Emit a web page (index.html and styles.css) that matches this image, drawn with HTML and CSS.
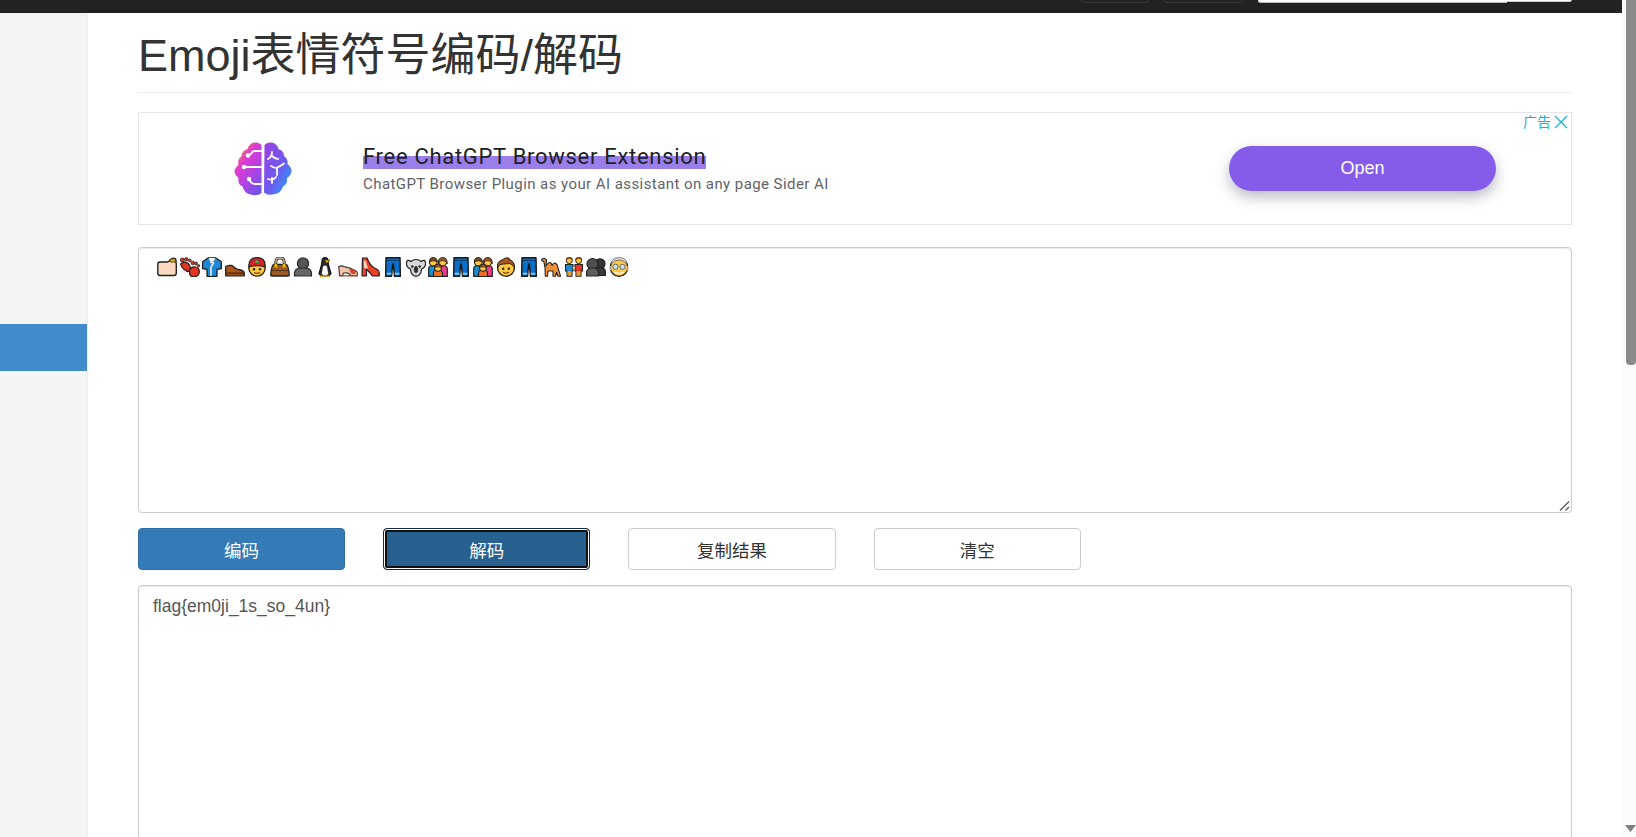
FILE: index.html
```html
<!DOCTYPE html>
<html lang="zh">
<head>
<meta charset="utf-8">
<title>Emoji表情符号编码/解码</title>
<link rel="stylesheet" href="styles.css">
</head>
<body>
<svg class="defs" width="0" height="0" aria-hidden="true">
  <defs>
    <linearGradient id="bl" x1="0.2" y1="0" x2="0.9" y2="1"><stop offset="0" stop-color="#f7a81f"/><stop offset=".3" stop-color="#e03ad0"/><stop offset=".65" stop-color="#a845e6"/><stop offset="1" stop-color="#6a55e8"/></linearGradient>
    <linearGradient id="br" x1="0" y1="0" x2="1" y2="1"><stop offset="0" stop-color="#a03fe0"/><stop offset=".55" stop-color="#6a5cf0"/><stop offset="1" stop-color="#1fb0f8"/></linearGradient>
    <symbol id="jeans" viewBox="0 0 20 20"><path d="M3 .8h14l.3 18.400h-5.800L10.300 7h-.6L8.500 19.200H2.700z" fill="#0a6ecb" stroke="#1a1a1a" stroke-width="1.500" stroke-linejoin="round"/><path d="M3.500 3.400h13" stroke="#0a3f78" stroke-width="1"/><path d="M3.700 16.800h4.700M11.700 16.800h4.700" stroke="#7cc6ee" stroke-width="2"/></symbol>
    <symbol id="family" viewBox="0 0 20 20"><path d="M.7 19.300v-7.800q0-3 4.300-3t4 3v7.800z" fill="#1d8fd0" stroke="#222" stroke-width="1.200"/><path d="M11 19.300v-7.800q0-3 4-3t4.300 3v7.800z" fill="#ec3f87" stroke="#222" stroke-width="1.200"/><circle cx="5.300" cy="5" r="3.900" fill="#ffc83d" stroke="#222" stroke-width="1.100"/><path d="M1.500 4.800Q1.800.6 5.300.6t3.800 4.200Q5.300 2.600 1.500 4.800z" fill="#7a4a1f" stroke="#222" stroke-width=".8"/><circle cx="14.700" cy="5" r="3.900" fill="#ffc83d" stroke="#222" stroke-width="1.100"/><path d="M10.300 7Q9.800.6 14.700.6T19.200 7q-.5-3.500-4.500-3.500T10.300 7z" fill="#a3561f" stroke="#222" stroke-width=".8"/><path d="M5.500 19.500v-3.500q0-3 4.500-3t4.500 3v3.500z" fill="#f36b21" stroke="#222" stroke-width="1.200"/><circle cx="10" cy="10.800" r="3.500" fill="#ffc83d" stroke="#222" stroke-width="1.100"/><path d="M6.600 10.500q.3-3.200 3.400-3.200t3.400 3.200q-3.400-1.500-6.800 0z" fill="#a3561f" stroke="#222" stroke-width=".7"/></symbol>
    <symbol id="bust" viewBox="0 0 20 20"><circle cx="10" cy="6.500" r="5.600" fill="#555" stroke="#2a2a2a" stroke-width="1.200"/><path d="M1.500 19v-2.500q0-5 5.500-5.500h6q5.500.5 5.500 5.500V19z" fill="#666" stroke="#2a2a2a" stroke-width="1.200"/></symbol>
  </defs>
</svg>

<div class="page">
  <header class="topbar">
    <span class="top-btn top-btn-a"></span>
    <span class="top-btn top-btn-b"></span>
    <span class="top-search"><span class="top-input"></span><span class="top-go"></span></span>
  </header>

  <div class="shell">
    <nav class="sidebar"><a class="side-active"></a></nav>

    <main class="content">
      <h1 class="title">Emoji表情符号编码/解码</h1>

      <section class="ad">
        <div class="ad-logo">
          <svg width="58" height="54" viewBox="0 0 58 54">
            <path d="M27.500 3q-2-3-6.500-2.500Q15 1 13.500 7 8 8.500 7.500 14 3 17.500 4.500 23 0 26.500.5 30t4 6q-1 6 4 8.500Q10 51 16.500 52.500q7 2 11-1.500z" fill="url(#bl)"/>
            <path d="M30.500 3q2-3 6.500-2.500Q43 1 44.500 7 50 9 50 14q4.500 3.500 3.500 8 4.500 3.500 4 7.500t-4.500 6.500q1 6-4 8.500-2 6.500-8 7.500-7.500 2-11-1.500z" fill="url(#br)"/>
            <g fill="none" stroke="#fff" stroke-width="1.800" stroke-linecap="round">
              <path d="M27 9h-6q-3 0-4 3l-3 1.500"/><path d="M27 25H10"/><path d="M27 42h-6q-4 0-6-5"/>
              <path d="M38 10q0 5-4 7M38 14q3 3 6 3"/><path d="M37 24q5 3 6 1.500 3-1 7-4M43 26v7"/><path d="M34 37q5 2 8-2M38 36v5"/>
            </g>
            <g fill="#fff"><circle cx="14" cy="13.500" r="2.200"/><circle cx="10" cy="25" r="2.200"/><circle cx="15" cy="37" r="2.200"/></g>
          </svg>
        </div>
        <div class="ad-copy">
          <div class="ad-title"><span class="ad-mark">Free ChatGPT Browser Extension</span></div>
          <div class="ad-sub">ChatGPT Browser Plugin as your AI assistant on any page Sider AI</div>
        </div>
        <button class="ad-open" type="button">Open</button>
        <div class="ad-choice"><span>广告</span><svg width="14" height="14" viewBox="0 0 14 14"><path d="M1 1l12 12M13 1L1 13" stroke="#14b4d2" stroke-width="1.300" fill="none"/></svg></div>
      </section>

      <div class="field-input">
        <div class="emoji-row">
          <svg class="e" viewBox="0 0 20 20"><path d="M.8 16V7.500Q.8 5 3 5h7q2 0 3.500-2.500Q15.500.5 18 1.500q1.300.5 1 3.500.3 2 .3 4v7q0 2.500-2.500 2.500H3Q.8 18.500.8 16z" fill="#fbd9c0" stroke="#222" stroke-width="1.400"/><path d="M12 4.500q2-3.500 6-3l.7 3.500Q15 5.500 12 4.500z" fill="#f4b400" stroke="#222" stroke-width=".8"/></svg>
          <svg class="e" viewBox="0 0 20 20"><path d="M.6 7q3.500-3.500 7.400-.8 3 2.500 2.500 6.300L9.300 14q-1.500 1.200-3 0Q1.300 11 .6 7z" fill="#e0341f" stroke="#222" stroke-width="1.200"/><path d="M9.500 13q2-4 6-3t3.900 5q-.7 4.500-4.700 4.700-4.500.3-5-2.500z" fill="#e0341f" stroke="#222" stroke-width="1.200"/><g fill="#e0341f" stroke="#222" stroke-width=".8"><circle cx="2.300" cy="3" r="2"/><circle cx="6.300" cy="2.200" r="1.700"/><circle cx="9.800" cy="3.500" r="1.400"/><circle cx="12.800" cy="6" r="1.700"/><circle cx="16" cy="6.500" r="1.500"/><circle cx="18.600" cy="8.800" r="1.200"/></g></svg>
          <svg class="e" viewBox="0 0 20 20"><path d="M6.500.8h7l5.700 3.700.3 7-4.500.8v7H5v-7L.5 11.500l.3-7z" fill="#1e88d6" stroke="#222" stroke-width="1.300" stroke-linejoin="round"/><path d="M7 1.500l4.500 4.500L9 10v9M13 1.500L8.500 6" fill="none" stroke="#eee" stroke-width="1.600"/><path d="M7.500 1h5L8.500 5z" fill="#fff"/></svg>
          <svg class="e" viewBox="0 0 20 20"><path d="M.7 9.500q3-1.500 6.300-1 3 3 6 4 6 .8 6.300 3.500v2.800H.7z" fill="#b0561d" stroke="#222" stroke-width="1.300" stroke-linejoin="round"/><path d="M1 16.300h18" stroke="#54300f" stroke-width="1.800"/></svg>
          <svg class="e" viewBox="0 0 20 20"><circle cx="10" cy="11" r="8.200" fill="#ffc83d" stroke="#222" stroke-width="1.300"/><path d="M2 10Q1 .8 10 .6T18 10q-8-2.500-16 0z" fill="#d3232a" stroke="#222" stroke-width="1.200"/><path d="M10 2.300l2.200 3.700H7.800z" fill="#35b44a"/><circle cx="7" cy="12.300" r="1.200" fill="#222"/><circle cx="13" cy="12.300" r="1.200" fill="#222"/><path d="M7 15.500q3 1.800 6 0" stroke="#7a3d10" stroke-width="1.100" fill="none"/></svg>
          <svg class="e" viewBox="0 0 20 20"><path d="M5.800 9V5.500q0-4.700 4.200-4.700t4.200 4.700V9" fill="none" stroke="#222" stroke-width="2.800"/><path d="M5.800 9V5.500q0-4.700 4.200-4.700t4.200 4.700V9" fill="none" stroke="#e8c9a8" stroke-width="1.200"/><path d="M3.500 7.500h13q2 1 2.800 10.500 0 1-1.200 1H1.900Q.7 19 .7 18q.8-9.500 2.800-10.500z" fill="#9a5a24" stroke="#222" stroke-width="1.300"/><path d="M2 13.500h16" stroke="#5a3312" stroke-width="1"/><rect x="4.500" y="7" width="2.800" height="3.500" fill="#f4b400"/><rect x="12.700" y="7" width="2.800" height="3.500" fill="#f4b400"/></svg>
          <svg class="e" viewBox="0 0 20 20"><use href="#bust"/></svg>
          <svg class="e" viewBox="0 0 20 20"><path d="M7 4.500Q7 .7 10 .7t3 3.800l.5 3.500 2.500 8.500-2 2.500H6l-2-2.500L6.500 8z" fill="#2c2c2c" stroke="#111" stroke-width="1.200"/><path d="M8 9.500q2-2 4 0l1.200 7-1.500 2H8.300l-1.500-2z" fill="#fafafa"/><path d="M9.500 3h5.500L11.500 6.500z" fill="#f4b400" stroke="#222" stroke-width=".6"/><path d="M5 19.200h4M11 19.200h4" stroke="#f4a300" stroke-width="1.600"/></svg>
          <svg class="e" viewBox="0 0 20 20"><path d="M.8 9.500q2.500-1.200 5.200 0 3 1 6 1.500l3 1.500q4 1 4.300 3.500V18.800H13q-2-3-5-3l-3 .5v2.500H1.500z" fill="#f3c6a8" stroke="#333" stroke-width="1.100" stroke-linejoin="round"/><path d="M11 11.500l7 2.200-1 3.500-4-.8z" fill="#d9412b"/><path d="M1.500 18.800h18" stroke="#b33820" stroke-width="1.200"/></svg>
          <svg class="e" viewBox="0 0 20 20"><path d="M2.500 1H7q2.500 6.500 6.500 9.500 5.500 2 5.800 5.500v2.800h-7Q8 13.500 6.500 12V18.800H2z" fill="#ec4028" stroke="#222" stroke-width="1.200" stroke-linejoin="round"/><path d="M3.800 3.500l2 .5 2.200 8-4-1z" fill="#fbd4b8"/></svg>
          <svg class="e" viewBox="0 0 20 20"><use href="#jeans"/></svg>
          <svg class="e" viewBox="0 0 20 20"><path d="M4.800 4.500Q.8 1.500.5 6t4 6l.7 4q2 3.300 4.800 3.300t4.800-3.300l.7-4q4.300-1.500 4-6t-4.300-1.500Q13 2.500 10 2.500T4.800 4.500z" fill="#d8d8d8" stroke="#222" stroke-width="1.200"/><ellipse cx="10" cy="12.500" rx="2.200" ry="3.500" fill="#333"/><circle cx="6.300" cy="9.500" r="1.200" fill="#222"/><circle cx="13.700" cy="9.500" r="1.200" fill="#222"/></svg>
          <svg class="e" viewBox="0 0 20 20"><use href="#family"/></svg>
          <svg class="e" viewBox="0 0 20 20"><use href="#jeans"/></svg>
          <svg class="e" viewBox="0 0 20 20"><use href="#family"/></svg>
          <svg class="e" viewBox="0 0 20 20"><circle cx="10" cy="10.800" r="8.500" fill="#ffc83d" stroke="#222" stroke-width="1.300"/><path d="M1.500 11Q.5 4 7 2.500q2-2.500 6-1.500 1 .5 0 1.500 6 2 5.500 8.500-2-4-5-4.500Q7 7 4 7.500 3 9 1.500 11z" fill="#a8561f" stroke="#222" stroke-width=".9"/><circle cx="7.200" cy="11.800" r="1.200" fill="#222"/><circle cx="12.800" cy="11.800" r="1.200" fill="#222"/><path d="M7 15.300q3 1.800 6 0" stroke="#7a3d10" stroke-width="1.100" fill="none"/></svg>
          <svg class="e" viewBox="0 0 20 20"><use href="#jeans"/></svg>
          <svg class="e" viewBox="0 0 20 20"><path d="M.5 3q1-2.200 3-1.700L5.500 3 5 9q2-3.500 3.700-3.500T11 8.500Q13 5 15 6.500t2.300 5.500l2.300 7.200H17l-1.500-4-1 4H12V14H7l-.5 5.200H4.300L4 11 3 5z" fill="#f0913a" stroke="#222" stroke-width="1.100" stroke-linejoin="round"/></svg>
          <svg class="e" viewBox="0 0 20 20"><circle cx="5.300" cy="3.600" r="3" fill="#ffc83d" stroke="#222"/><circle cx="14.700" cy="3.600" r="3" fill="#ffc83d" stroke="#222"/><path d="M2 2.500Q5.300-1 8.600 2.500M11.400 2.500q3.300-3.500 6.600 0" stroke="#7a3d10" stroke-width="1.400" fill="none"/><path d="M1.500 7.500h7.500v6.500H8v5.200H3V14H1.500z" fill="#1c8bd1" stroke="#222" stroke-width="1.100"/><path d="M11 7.500h7.500v6.500H17v5.200h-5V14h-1z" fill="#e8342a" stroke="#222" stroke-width="1.100"/><path d="M3.500 14H7.500v4.700H3.500zM12.500 14h4v4.700h-4z" fill="#e0a030"/><path d="M9 11h2" stroke="#ffc83d" stroke-width="1.800"/></svg>
          <svg class="e" viewBox="0 0 20 20"><circle cx="14" cy="6.800" r="5" fill="#333" stroke="#222" stroke-width="1.200"/><path d="M9 18.500v-3q0-4.500 4-5h2q4.500.5 4.500 5v3z" fill="#3a3a3a" stroke="#222" stroke-width="1.200"/><circle cx="6.500" cy="7" r="5.500" fill="#4e4e4e" stroke="#222" stroke-width="1.200"/><path d="M.6 19v-3q0-4.500 4.400-5h3q4.500.5 4.500 5v3z" fill="#5e5e5e" stroke="#222" stroke-width="1.200"/></svg>
          <svg class="e" viewBox="0 0 20 20"><circle cx="10" cy="10.500" r="8.800" fill="#ffc83d" stroke="#222" stroke-width="1.300"/><path d="M1.800 7.500Q2.500.8 10 .6t8.200 6.900l-2.500-2.500Q14.500 3 10 3T4.300 5z" fill="#e8e8e8" stroke="#555" stroke-width=".8"/><path d="M1.200 9q-1.200 2 0 4.500M18.800 9q1.200 2 0 4.500" stroke="#ddd" stroke-width="1.800" fill="none"/><g fill="#bfe6f5" stroke="#667" stroke-width="1"><circle cx="6.500" cy="9.800" r="2.600"/><circle cx="13.500" cy="9.800" r="2.600"/></g><path d="M5.500 15q4.500 3.200 9 0" stroke="#eee" stroke-width="1.800" fill="none"/></svg>
        </div>
        <svg class="grip" width="11" height="11" viewBox="0 0 11 11"><path d="M1 10.500L10 1.500M6.500 10.500l3.500-3.500" stroke="#555" stroke-width="1.300" fill="none"/></svg>
      </div>

      <div class="actions">
        <button class="btn btn-primary" type="button">编码</button>
        <button class="btn btn-focus" type="button">解码</button>
        <button class="btn" type="button">复制结果</button>
        <button class="btn" type="button">清空</button>
      </div>

      <textarea class="output" readonly>flag{em0ji_1s_so_4un}</textarea>
    </main>
  </div>
</div>

<aside class="scrollbar">
  <div class="thumb"></div>
  <svg class="arrow" width="11" height="7" viewBox="0 0 11 7"><path d="M0 0h11L5.500 7z" fill="#808080"/></svg>
</aside>
</body>
</html>
```

FILE: styles.css
```css
* { box-sizing: border-box; }
html, body { margin: 0; height: 100%; overflow: hidden; }
body {
  display: flex;
  background: #fff;
  color: #333;
  font-family: "Liberation Sans", "Noto Sans CJK SC", sans-serif;
}
.defs { position: absolute; }

.page {
  flex: 1;
  min-width: 0;
  display: flex;
  flex-direction: column;
}

.topbar {
  flex: 0 0 13px;
  padding: 0 50px 10px 0;
  background: #222;
  display: flex;
  justify-content: flex-end;
  align-items: flex-end;
  overflow: hidden;
}
.top-btn {
  flex: none;
  height: 30px;
  border: 1px solid #3a3a3a;
  border-radius: 3px;
}
.top-btn-a { width: 68px; margin-right: 15px; }
.top-btn-b { width: 79px; margin-right: 15px; }
.top-search { flex: none; display: flex; width: 314px; height: 30px; }
.top-input { flex: 1; background: #fff; border-bottom: 1px solid #bbb; border-radius: 0 0 0 3px; }
.top-go { width: 65px; background: #fff; border-bottom: 1px solid #ccc; border-radius: 0 0 3px 0; margin-bottom: 1px; }

.shell { flex: 1; min-height: 0; display: flex; }

.sidebar {
  flex: 0 0 88px;
  padding-top: 311px;
  background: #f4f4f4;
  border-right: 1px solid #eee;
}
.side-active { display: block; height: 47px; background: #428bca; }

.content {
  flex: 1;
  min-width: 0;
  padding: 0 50px;
  overflow: hidden;
}

.title {
  margin: 0 0 19px;
  height: 80px;
  padding-top: 16px;
  font-size: 45px;
  line-height: 54px;
  font-weight: 400;
  color: #333;
  border-bottom: 1px solid #eee;
}

.ad {
  position: relative;
  height: 113px;
  border: 1px solid #e6e6e6;
  display: flex;
  align-items: center;
}
.ad-logo { flex: none; width: 224px; padding-left: 95px; height: 54px; }
.ad-copy { flex: none; width: 866px; font-family: Roboto, "Liberation Sans", sans-serif; }
.ad-title { font-size: 22px; line-height: 26px; color: #202124; letter-spacing: .7px; }
.ad-mark { background: linear-gradient(transparent 50%, #9a7ee9 50%); }
.ad-sub { font-size: 15px; line-height: 20px; margin-top: 4px; color: #5f6368; letter-spacing: .43px; }
.ad-open {
  flex: none;
  width: 267px;
  height: 45px;
  border: 0;
  border-radius: 23px;
  background: #855cea;
  color: #fff;
  font: 18px "Liberation Sans", sans-serif;
  box-shadow: 0 6px 14px rgba(60, 64, 90, .35);
}
.ad-choice {
  position: absolute;
  top: 1px;
  right: 3px;
  display: flex;
  align-items: center;
  gap: 3px;
  color: #14b4d2;
  font-size: 14px;
  line-height: 16px;
}

.field-input {
  position: relative;
  height: 266px;
  margin-top: 22px;
  border: 1px solid #ccc;
  border-radius: 4px;
  box-shadow: inset 0 1px 1px rgba(0, 0, 0, .075);
  padding: 9px 0 0 18px;
}
.emoji-row { display: flex; gap: 2.600px; }
.e { flex: none; width: 20px; height: 20px; }
.grip { position: absolute; right: 1px; bottom: 1px; }

.actions { display: flex; gap: 38px; margin-top: 15px; }
.btn {
  flex: none;
  width: 207.200px;
  height: 42px;
  border: 1px solid #ccc;
  border-radius: 4px;
  background: #fff;
  color: #333;
  font: 17.500px "Liberation Sans", "Noto Sans CJK SC", sans-serif;
}
.btn-primary { background: #337ab7; border-color: #2e6da4; color: #fff; }
.btn-focus {
  background: #286090;
  border-color: #122b40;
  color: #fff;
  box-shadow: inset 0 0 0 1px #fff, inset 0 0 0 3px #111;
}

.output {
  display: block;
  width: 100%;
  height: 400px;
  margin-top: 15px;
  padding: 7.500px 14px;
  border: 1px solid #ccc;
  border-radius: 4px;
  box-shadow: inset 0 1px 1px rgba(0, 0, 0, .075);
  color: #555;
  font: 17.500px/25px "Liberation Sans", sans-serif;
  resize: none;
  outline: 0;
}

.scrollbar {
  flex: 0 0 14px;
  background: #fbfbfb;
  display: flex;
  flex-direction: column;
  align-items: flex-end;
  justify-content: space-between;
  padding-bottom: 5px;
}
.thumb { width: 10px; height: 365px; background: #8a8a8a; border-radius: 0 0 4px 4px; }
.arrow { display: block; }
```
